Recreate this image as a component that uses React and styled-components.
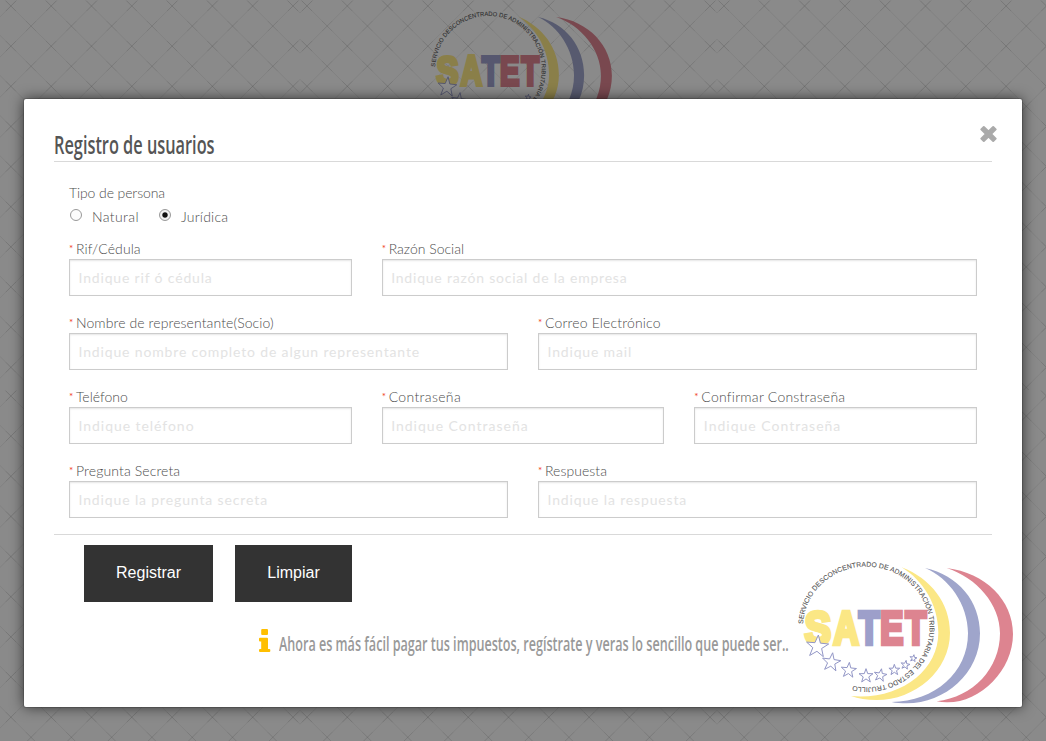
import React from 'react';
import styled, { createGlobalStyle } from 'styled-components';

const GlobalStyle = createGlobalStyle`
  * { box-sizing: border-box; }
  html, body { margin: 0; height: 100%; overflow: hidden; background: #fafafa; }
  body { font-family: Lato, "Liberation Sans", sans-serif; color: #4d4d4d; }
`;

const Page = styled.div`
  position: relative;
  width: 1046px;
  height: 741px;
  overflow: hidden;
  background: #fbfbfb;
`;

const Backdrop = styled.svg`
  position: absolute;
  inset: 0;
  width: 100%;
  height: 100%;
`;

const Header = styled.header`
  position: relative;
  display: flex;
  padding: 1px 0 0 420px;
`;

const Overlay = styled.div`
  position: absolute;
  inset: 0;
  padding: 99px 24px 34px;
  background: rgba(0, 0, 0, 0.45);
`;

const Modal = styled.section`
  height: 608px;
  padding: 30px 30px 0;
  display: flex;
  flex-direction: column;
  position: relative;
  background: #fff;
  border-radius: 2px;
  box-shadow: 0 0 0 1px rgba(0, 0, 0, 0.15), 0 0 14px rgba(0, 0, 0, 0.65);
`;

const CloseButton = styled.button`
  position: absolute;
  top: 26px;
  right: 24px;
  width: 19px;
  height: 18px;
  padding: 0;
  border: 0;
  background: none;
  svg { display: block; }
`;

const Title = styled.h3`
  height: 33px;
  margin: 0 0 21px;
  border-bottom: 1px solid #d9d9d9;
  color: #555;
`;

const Condensed = styled.span`
  display: inline-block;
  white-space: nowrap;
  transform-origin: 0 50%;
  transform: scaleX(${p => p.$squeeze});
  font: ${p => p.$weight} ${p => p.$size}px/${p => p.$line}px "Open Sans", "Liberation Sans", sans-serif;
`;

const Form = styled.form`
  display: flex;
  flex-direction: column;
  flex-shrink: 0;
  border-bottom: 1px solid #d9d9d9;
  height: 352px;
`;

const Kind = styled.div`
  flex-shrink: 0;
  padding-left: 15px;
  height: 56px;
  font-size: 14px;
  font-weight: 300;
  line-height: 20px;
`;

const KindLabel = styled.div`
  letter-spacing: -0.1px;
`;

const Choices = styled.div`
  display: flex;
  height: 24px;
  padding-top: 4px;
`;

const Choice = styled.label`
  display: flex;
  width: ${p => p.$width}px;
  letter-spacing: ${p => p.$tracking}px;
`;

const Radio = styled.span`
  width: 12px;
  height: 12px;
  margin: 2px 10px 0 1px;
  border: 1px solid #999;
  border-radius: 50%;
  background: ${p => (p.$on ? 'radial-gradient(circle, #111 0 2.2px, #f1f1f1 3.2px)' : '#fcfcfc')};
`;

const Row = styled.div`
  display: grid;
  grid-template-columns: repeat(12, 1fr);
  flex: 0 0 74px;
  &:last-child { flex-basis: 73px; }
`;

const Field = styled.label`
  grid-column: span ${p => p.$span};
  padding: 0 15px;
  min-width: 0;
  font-size: 14px;
  font-weight: 300;
  line-height: 20px;
`;

const Caption = styled.span`
  display: flex;
  gap: 3px;
  letter-spacing: ${p => p.$tracking}px;
`;

const Star = styled.span`
  width: 4px;
  color: #f04124;
  font-size: 10px;
  font-weight: 400;
  line-height: 19px;
`;

const Input = styled.input`
  display: block;
  width: 100%;
  height: 37px;
  padding: 0 8.5px 1px;
  border: 1px solid #ccc;
  border-radius: 0;
  background: #fff;
  box-shadow: inset 0 1px 2px rgba(0, 0, 0, 0.1);
  font: 400 14px Lato, sans-serif;
  letter-spacing: ${p => p.$tracking}px;
  &::placeholder { color: #e3e3e3; opacity: 1; }
`;

const Actions = styled.div`
  display: flex;
  gap: 22px;
  padding: 10px 30px 0;
`;

const Button = styled.button`
  width: ${p => p.$width}px;
  height: 57px;
  padding: 0 0 2px;
  border: 0;
  background: #333;
  color: #fff;
  font: 400 16px "Liberation Sans", Arial, sans-serif;
`;

const Footer = styled.footer`
  position: absolute;
  right: -3px;
  bottom: -8px;
  display: flex;
  height: 165px;
`;

const Notice = styled.div`
  display: flex;
  width: 526.5px;
  padding-top: 78px;
  color: #999;
  gap: 8px;
  svg { flex: none; margin-top: 1px; }
`;

const W = 417;
const H = 390;
const DX = 40.3;
const DY = 40.15;
const range = (a, b) => Array.from({ length: b - a + 1 }, (_, i) => i + a);

function DiamondPattern() {
  const crosses = [];
  range(0, 10).forEach(i => range(0, 9).forEach(j => {
    crosses.push([7 + i * DX, 6 + j * DY, 0.1]);
    crosses.push([7 + (i + 0.5) * DX, 6 + (j + 0.5) * DY, 0.07]);
  }));
  return (
    <Backdrop>
      <defs>
        <pattern id="diamonds" x="-117" y="0" width={W} height={H} patternUnits="userSpaceOnUse">
          {range(-11, 21).map(k => (
            <g key={k} stroke="#000" strokeOpacity="0.07" strokeWidth="0.8">
              <line x1={7 + (k - 1) * DX} y1={6 - DY} x2={7 + (k + 10) * DX} y2={6 + 10 * DY} />
              <line x1={7 + (k + 1) * DX} y1={6 - DY} x2={7 + (k - 10) * DX} y2={6 + 10 * DY} />
            </g>
          ))}
          {crosses.map(([x, y, o], i) => (
            <path key={i} d={`M${x - 5} ${y - 5}l10 10m0-10l-10 10`} stroke="#000" strokeOpacity={o} strokeWidth="0.8" />
          ))}
        </pattern>
      </defs>
      <rect width="100%" height="100%" fill="url(#diamonds)" />
    </Backdrop>
  );
}

const starPath = (cx, cy, r, turn = 0) =>
  range(0, 9).map(i => {
    const a = ((-90 + turn + i * 36) * Math.PI) / 180;
    const q = i % 2 ? r * 0.4 : r;
    return `${i ? 'L' : 'M'}${(cx + q * Math.cos(a)).toFixed(1)} ${(cy + q * Math.sin(a)).toFixed(1)}`;
  }).join('') + 'Z';

const stars = [
  [97, 290, 35, 5], [139, 337, 29, 8], [191, 361, 24, 5], [243, 378, 22, 0],
  [286, 376, 20, 10], [328, 360, 17, 0], [361, 345, 14, 10], [385, 325, 11, 10],
];

const letters = [
  ['S', 60, 77, '#fbe785'], ['A', 141, 85, '#fbe785'], ['T', 219, 67, '#9d9fca'],
  ['E', 288, 67, '#dd8490'], ['T', 359, 67, '#dd8490'],
];

const letterBox = { S: [0.046, 0.575], A: [0.0, 0.722], T: [0.021, 0.569], E: [0.067, 0.559] };

function Logo({ id, width, height }) {
  const size = 140;
  return (
    <svg width={width} height={height} viewBox="0 0 720 495" preserveAspectRatio="none">
      <path fill="#fbe785" d="M350 52C438 86 495 160 495 248C495 362 390 450 275 450C245 450 220 446 198 438C345 451 460 362 460 248C460 165 415 92 350 52Z" />
      <path fill="#9fa5cb" d="M420 54C520 75 585 155 585 250C585 370 480 460 365 460C348 460 333 459 320 456C450 455 549 367 549 250C549 163 492 84 420 54Z" />
      <path fill="#dd8490" d="M485 54C600 68 684 150 684 252C684 362 585 459 485 457C475 457 465 456 455 454C565 442 645 355 645 250C645 163 575 83 485 54Z" />
      {letters.map(([c, x, w, fill], i) => {
        const [l, span] = letterBox[c];
        const s = (w - 9) / (span * size);
        return (
          <text key={i} transform={`translate(${x + 4.5 - l * size * s} 282) scale(${s} 1)`} fontFamily="Liberation Sans, sans-serif" fontWeight="700" fontSize={size} fill={fill} stroke={fill} strokeWidth="13">{c}</text>
        );
      })}
      <g fill="#fff" stroke="#9296c6" strokeWidth="3">
        {stars.map((s, i) => <path key={i} d={starPath(...s)} />)}
      </g>
      <path id={id} fill="none" d="M54 222A190 181 0 1 1 192 405" />
      <text fontFamily="Liberation Sans, sans-serif" fontSize="20.5" fill="#555" stroke="#555" strokeWidth="0.3">
        <textPath href={`#${id}`} textLength="906" lengthAdjust="spacing">SERVICIO DESCONCENTRADO DE ADMINISTRACIÓN TRIBUTARIA DEL ESTADO TRUJILLO</textPath>
      </text>
    </svg>
  );
}

function LabeledInput({ span, label, hint, labelTracking = 0, hintTracking = 0.83 }) {
  return (
    <Field $span={span}>
      <Caption $tracking={labelTracking}><Star>*</Star>{label}</Caption>
      <Input placeholder={hint} $tracking={hintTracking} />
    </Field>
  );
}

const rows = [
  [[4, 'Rif/Cédula', 'Indique rif ó cédula', 0.1], [8, 'Razón Social', 'Indique razón social de la empresa', 0, 0.79]],
  [[6, 'Nombre de representante(Socio)', 'Indique nombre completo de algun representante', 0.1, 0.85], [6, 'Correo Electrónico', 'Indique mail', 0.16]],
  [[4, 'Teléfono', 'Indique teléfono', 0, 0.95], [4, 'Contraseña', 'Indique Contraseña', 0.35, 1], [4, 'Confirmar Constraseña', 'Indique Contraseña', 0.24, 1]],
  [[6, 'Pregunta Secreta', 'Indique la pregunta secreta', 0.12, 0.87], [6, 'Respuesta', 'Indique la respuesta', 0.05, 0.85]],
];

export default function App() {
  return (
    <Page>
      <GlobalStyle />
      <DiamondPattern />
      <Header><Logo id="ring-header" width={202} height={147} /></Header>
      <Overlay>
        <Modal>
          <CloseButton type="button" aria-label="Cerrar">
            <svg width="19" height="18" viewBox="0 0 19 18">
              <path d="M4.8 2L9.5 6.5L14.2 2L16.7 4.4L12 9L16.7 13.6L14.2 16L9.5 11.5L4.8 16L2.3 13.6L7 9L2.3 4.4Z" fill="#aaa" stroke="#aaa" strokeWidth="2" strokeLinejoin="round" />
            </svg>
          </CloseButton>
          <Title><Condensed $squeeze={0.653} $size={25} $weight={600} $line={30}>Registro de usuarios</Condensed></Title>
          <Form>
            <Kind>
              <KindLabel>Tipo de persona</KindLabel>
              <Choices>
                <Choice $width={89} $tracking={0.4}><Radio />Natural</Choice>
                <Choice $width={89} $tracking={0.2}><Radio $on />Jurídica</Choice>
              </Choices>
            </Kind>
            {rows.map((row, i) => (
              <Row key={i}>
                {row.map(([span, label, hint, lt, ht]) => (
                  <LabeledInput key={label} span={span} label={label} hint={hint} labelTracking={lt} hintTracking={ht} />
                ))}
              </Row>
            ))}
          </Form>
          <Actions>
            <Button type="button" $width={129}>Registrar</Button>
            <Button type="button" $width={117}>Limpiar</Button>
          </Actions>
          <Footer>
            <Notice>
              <svg width="12" height="25" viewBox="0 0 12 25">
                <path fill="#ffbf00" d="M3.2 0H8Q9 0 9 1V5Q9 6 8 6H3.2Q2.2 6 2.2 5V1Q2.2 0 3.2 0ZM1 8.8H8Q9 8.8 9 9.8V20H10.3Q11.3 20 11.3 21V22Q11.3 23 10.3 23H1Q0 23 0 22V21Q0 20 1 20H2.2V12.6H1Q0 12.6 0 11.6V9.8Q0 8.8 1 8.8Z" />
              </svg>
              <Condensed $squeeze={0.662} $size={19} $weight={600} $line={33}>Ahora es más fácil pagar tus impuestos, regístrate y veras lo sencillo que puede ser..</Condensed>
            </Notice>
            <Logo id="ring-modal" width={240} height={165} />
          </Footer>
        </Modal>
      </Overlay>
    </Page>
  );
}
